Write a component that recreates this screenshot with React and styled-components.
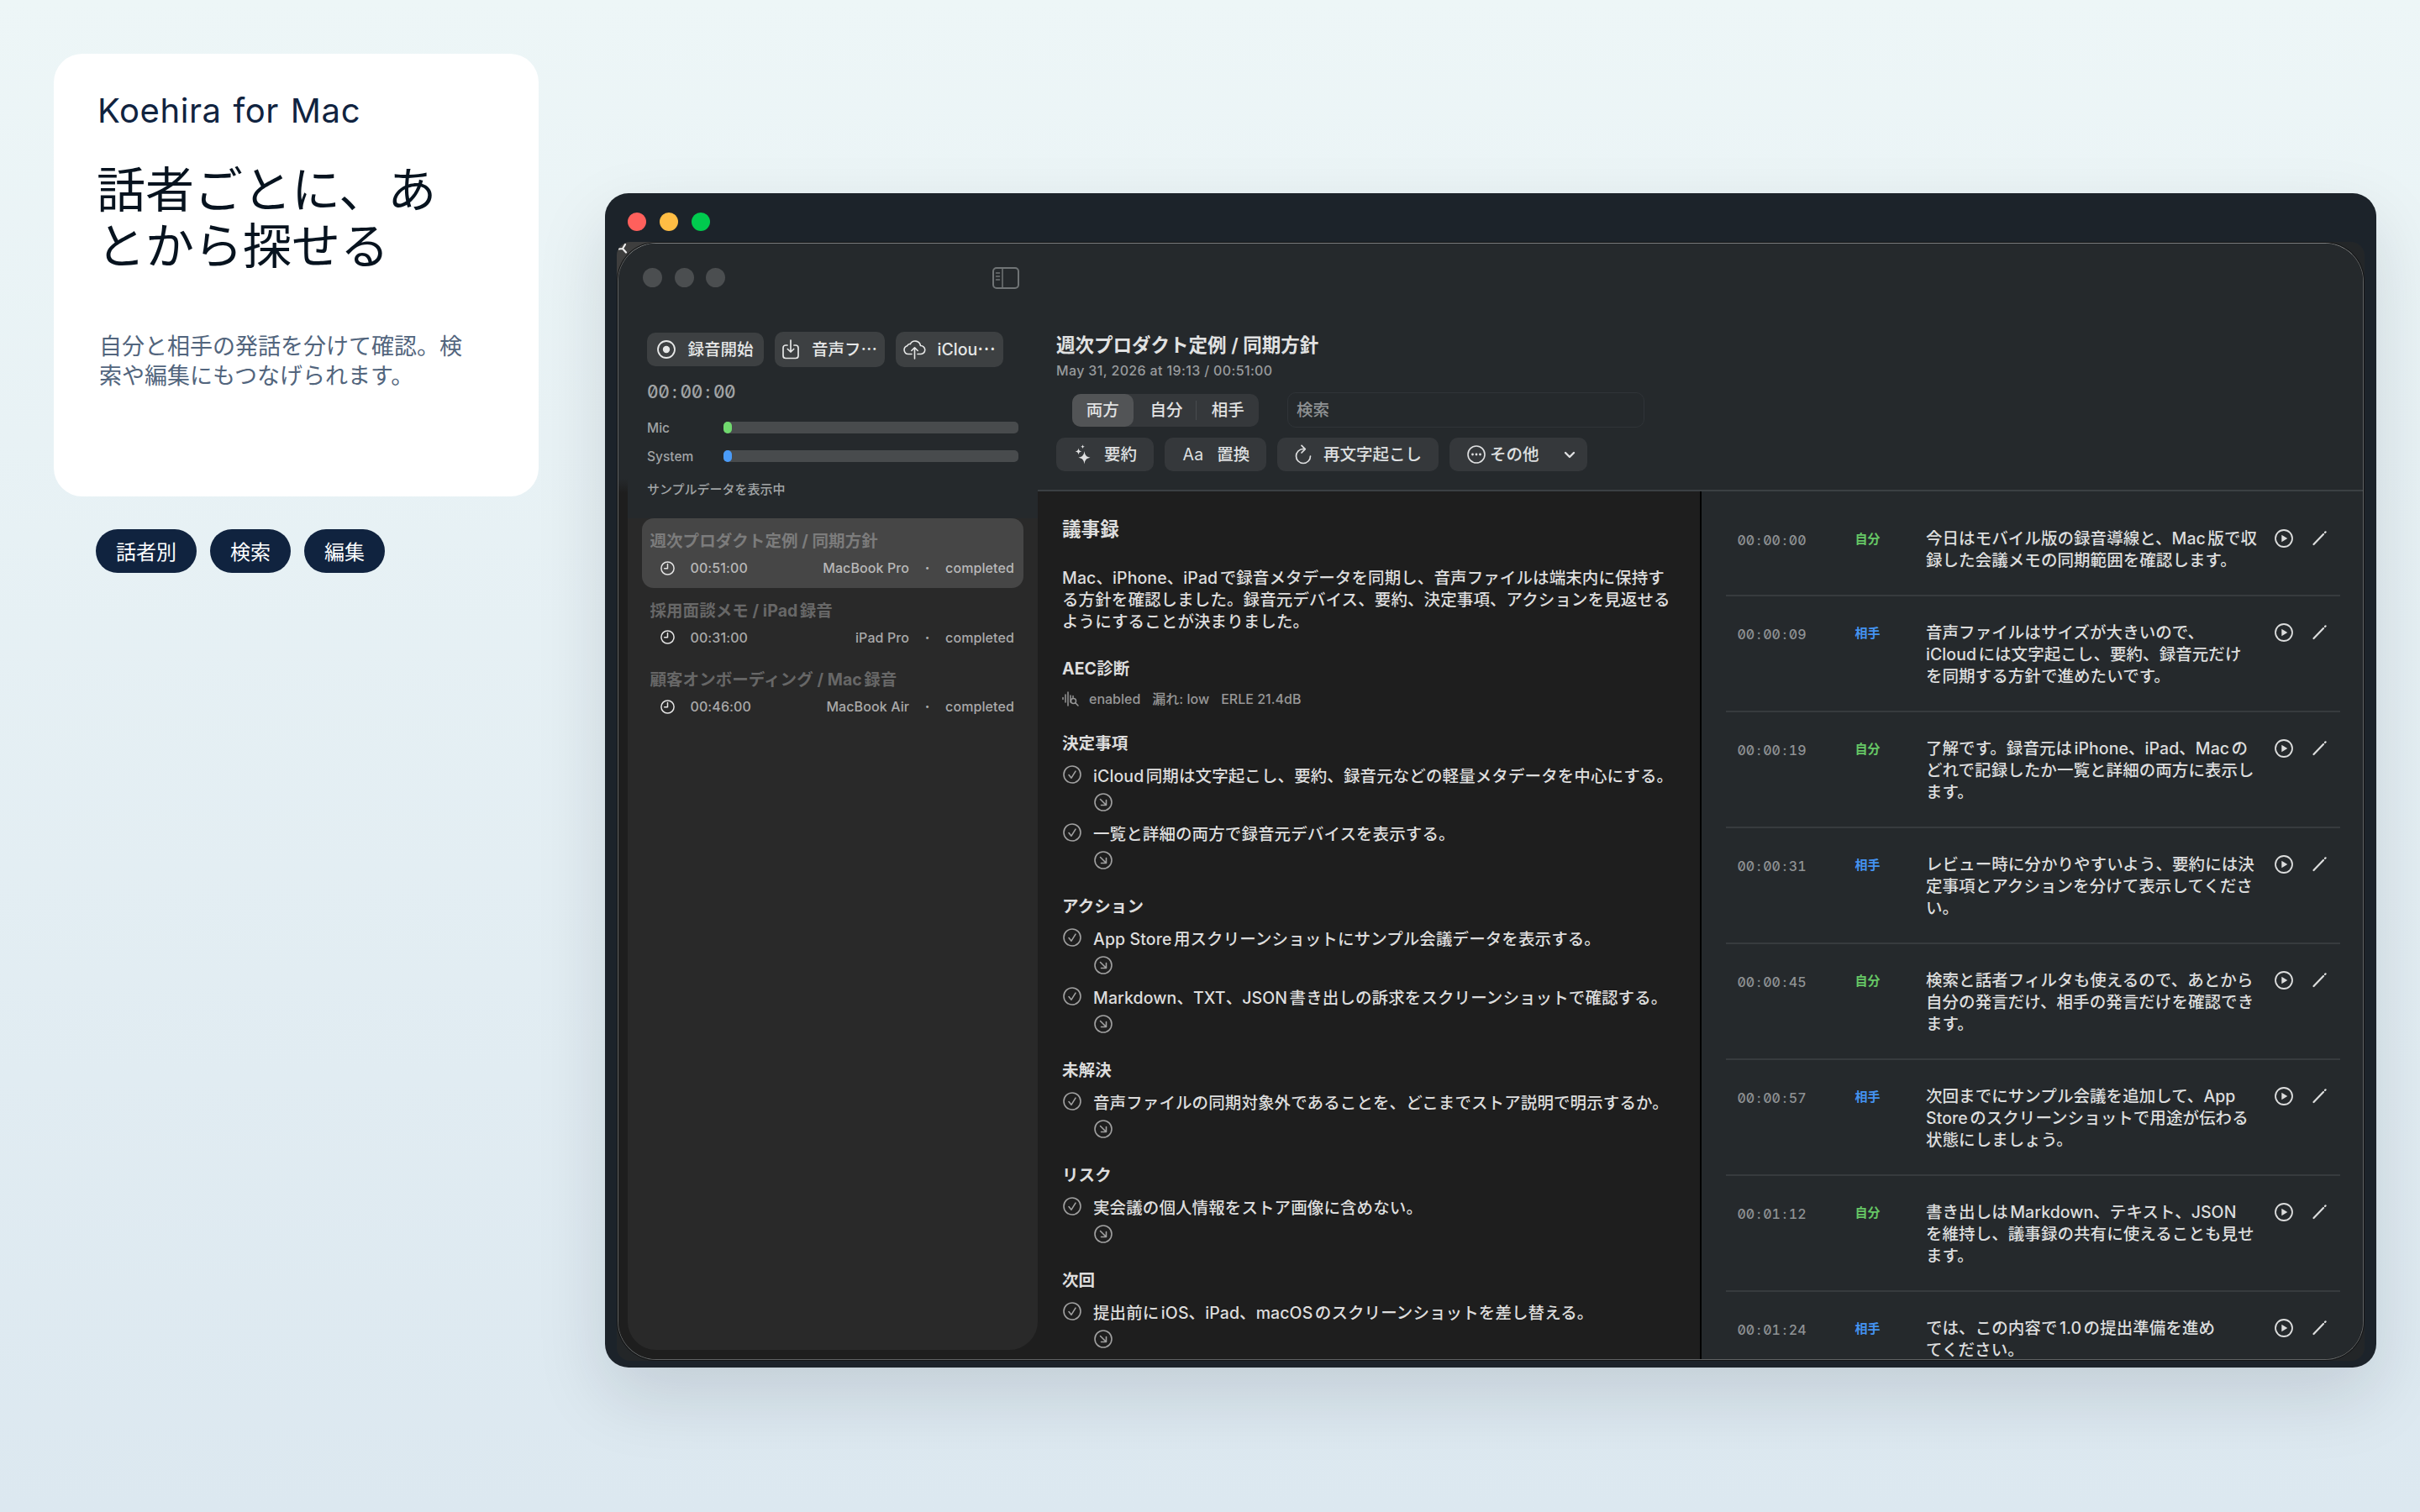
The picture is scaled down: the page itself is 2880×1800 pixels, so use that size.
import React from 'react'
import styled, { createGlobalStyle } from 'styled-components'

const Global = createGlobalStyle`
* { box-sizing: border-box; }
body {
margin: 0;
font-family: Inter, 'Noto Sans CJK JP', sans-serif;
text-autospace: normal;
white-space: nowrap;
}
svg { display: block; flex: none; fill: none; stroke: currentColor; stroke-linecap: round; stroke-linejoin: round; }
`

const Page = styled.main`
display: flex;
align-items: flex-start;
width: 2880px;
height: 1800px;
padding: 64px 52px 0 64px;
overflow: hidden;
background: linear-gradient(#edf6f7, #dce8f0);
`

/* ---------- intro ---------- */

const Intro = styled.section`
width: 577px;
font-family: 'Noto Sans CJK JP', sans-serif;
`

const IntroCard = styled.div`
height: 527px;
padding: 38px 50px 0 52px;
border-radius: 34px;
background: #fff;
`

const Product = styled.p`
margin: 0;
font-family: Inter, sans-serif;
font-size: 40px;
line-height: 60px;
letter-spacing: .6px;
word-spacing: 2px;
color: #10233f;
`

const Headline = styled.h1`
margin: 27px 0 0 -1px;
font-size: 58px;
font-weight: 400;
line-height: 67px;
color: #07131f;
`

const Lead = styled.p`
margin: 70px 0 0 2px;
font-size: 27px;
line-height: 35px;
color: #52657d;
`

const Tags = styled.div`
display: flex;
gap: 16px;
margin: 39px 0 0 50px;
`

const Tag = styled.span`
padding: 0 24px;
border-radius: 26px;
font-size: 24px;
line-height: 52px;
color: #fff;
background: #10233f;
`

/* ---------- window frame ---------- */

const Frame = styled.section`
width: 2108px;
height: 1398px;
margin: 166px 0 0 79px;
padding: 0 14px;
border-radius: 28px;
background: #1c232a;
box-shadow: 0 34px 84px rgba(12, 22, 42, .13);
`

const TrafficLights = styled.div`
display: flex;
align-items: center;
gap: 16px;
height: 58px;
padding: 10px 0 0 13px;
`

const Light = styled.i`
width: 22px;
height: 22px;
border-radius: 50%;
background: ${p => p.$color};
`

const Backdrop = styled.div`
position: relative;
height: 1332px;
padding: 1px;
border-radius: 16px;
overflow: hidden;
background: linear-gradient(135deg, #3e3e3e 3%, #232628 6%);
`

const CornerMark = styled.svg`
position: absolute;
left: 2px;
top: 1px;
color: #eee;
`

const AppWindow = styled.div`
position: relative;
display: flex;
height: 1330px;
border: 1.5px solid #606364;
border-top-color: #7b7e7f;
border-radius: 46px;
overflow: hidden;
background: #1e1e1e;
box-shadow: 0 0 0 1px #131415;
`

/* ---------- sidebar ---------- */

const SidebarArea = styled.aside`
width: 499px;
padding: 0 0 11px 11px;
background: linear-gradient(#25292c 280px, #1e1e1e 297px);
`

const Sidebar = styled.div`
height: 1317px;
border-radius: 0 0 34px 34px;
background: linear-gradient(#25292c 327px, #292929 327px);
`

const SidebarTop = styled.div`
display: flex;
align-items: center;
gap: 14.5px;
height: 81px;
padding: 0 22px 0 18px;
svg { margin-left: auto; color: #707476; }
`

const IdleDot = styled.i`
width: 23px;
height: 23px;
border-radius: 50%;
background: #4b4e50;
`

const Actions = styled.div`
display: flex;
align-items: center;
gap: 13px;
height: 42px;
margin: 24px 0 0 23px;
`

const ActionButton = styled.button`
display: flex;
align-items: center;
width: ${p => p.$w}px;
height: ${p => p.$h || 42}px;
padding: 0 0 0 ${p => p.$pad}px;
gap: ${p => p.$gap}px;
border: 0;
border-radius: 10px;
font: 500 19.5px/28px Inter, 'Noto Sans CJK JP', sans-serif;
color: #e6e7e7;
background: #3d4042;
`

const Ellipsis = styled.span`
font-family: 'Noto Sans CJK JP', sans-serif;
line-height: 0;
vertical-align: ${p => p.$lift || 0}px;
`

const Timer = styled.div`
height: 30px;
margin: 15px 0 10px 23px;
line-height: 30px;
color: #a1a4a6;
`

const Digits = styled.span`
font-size: ${p => p.$size}px;
font-weight: 500;
font-feature-settings: 'zero', 'tnum';
letter-spacing: ${p => p.$track || 0}px;
`

const Colon = styled.span`
display: inline-block;
width: .62em;
text-align: center;
letter-spacing: 0;
`

const Meter = styled.div`
display: flex;
align-items: center;
height: 34px;
padding: 0 23px;
font-size: 15.5px;
font-weight: 500;
color: #a1a4a6;
`

const MeterName = styled.span`
width: 90.5px;
`

const Track = styled.div`
width: 351px;
height: 14px;
border-radius: 5px;
background: #484b4d;
`

const Level = styled.div`
width: 10px;
height: 14px;
border-radius: 5px;
background: ${p => p.$color};
`

const Status = styled.div`
height: 46px;
margin-bottom: 11px;
padding-left: 23px;
font-size: 15px;
font-weight: 500;
line-height: 46px;
color: #a1a4a6;
`

const Recording = styled.div`
height: 82.7px;
margin: 0 17px 0 16.5px;
padding: 13px 11px 0 10px;
border-radius: 14px;
background: ${p => (p.$active ? '#464646' : 'transparent')};
`

const RecordingTitle = styled.div`
font-size: 19.5px;
font-weight: 700;
line-height: 28px;
letter-spacing: .06px;
color: ${p => (p.$active ? '#7c7c7c' : '#676767')};
`

const RecordingMeta = styled.div`
display: flex;
align-items: center;
height: 20px;
margin-top: 8px;
padding-left: 12px;
font-size: 16px;
font-weight: 500;
letter-spacing: .1px;
color: ${p => (p.$active ? '#b8b8b8' : '#a9a9a9')};
svg { margin-right: 19px; color: #e4e4e4; }
`

const Device = styled.span`
margin-left: auto;
`

const Bullet = styled.span`
width: 43px;
font-weight: 800;
text-align: center;
`

/* ---------- detail ---------- */

const Detail = styled.div`
flex: 1;
display: flex;
flex-direction: column;
`

const Header = styled.header`
height: 295px;
padding: 106px 0 0 22px;
border-bottom: 2px solid #3b4043;
background: #25292c;
`

const MeetingTitle = styled.h2`
margin: 0;
font-size: 22.5px;
font-weight: 600;
line-height: 30px;
color: #e1e2e2;
`

const MeetingDate = styled.div`
font-size: 16px;
font-weight: 500;
line-height: 30px;
letter-spacing: .36px;
color: #989b9d;
`

const FilterRow = styled.div`
display: flex;
align-items: center;
height: 42px;
margin: 11px 0 0 18.5px;
`

const Segments = styled.div`
display: flex;
align-items: center;
width: 222.5px;
height: 39px;
border-radius: 10px;
font-size: 19.5px;
font-weight: 500;
line-height: 39px;
color: #e1e2e2;
background: #35383b;
`

const Segment = styled.span`
width: 74px;
padding-left: ${p => p.$nudge || 0}px;
text-align: center;
border-radius: 10px;
background: ${p => (p.$active ? '#525456' : 'transparent')};
`

const SegmentDivider = styled.i`
width: 1.5px;
height: 23px;
background: #484c4f;
`

const Search = styled.div`
width: 425px;
height: 42px;
margin-left: 34px;
padding-left: 10px;
border: 1.5px solid #303438;
border-radius: 10px;
font-size: 19.5px;
font-weight: 500;
line-height: 40px;
color: #8f9294;
`

const Tools = styled.div`
display: flex;
gap: 13.5px;
margin-top: 12px;
`

const Tool = styled(ActionButton)`
height: 40px;
color: #dfe0e1;
background: #35383b;
`

const Aa = styled.span`
font-size: 19.5px;
font-weight: 400;
letter-spacing: .4px;
`

const ChevronSlot = styled.span`
margin-left: 24px;
`

const Panes = styled.div`
flex: 1;
display: flex;
min-height: 0;
`

const Minutes = styled.article`
width: 790px;
padding: 30px 0 0 29px;
border-right: 2px solid #000;
overflow: hidden;
font-size: 19.5px;
font-weight: 500;
line-height: 26px;
letter-spacing: .1px;
color: #dddddd;
background: #1e1e1e;
`

const MinutesTitle = styled.h3`
margin: 0 0 30px;
font-size: 22.5px;
font-weight: 600;
line-height: 30px;
`

const Section = styled.section`
margin-top: ${p => p.$top || 31}px;
`

const SectionTitle = styled.h4`
margin: 0 0 13px;
font-size: 19.5px;
font-weight: 700;
line-height: 26px;
text-autospace: no-autospace;
`

const Diagnostics = styled.div`
display: flex;
align-items: center;
gap: 14px;
height: 20px;
font-size: 16px;
letter-spacing: 0;
color: #979797;
svg { margin-right: -2px; }
`

const Item = styled.div`
display: grid;
grid-template-columns: 22px auto;
column-gap: 14px;
row-gap: 7px;
margin-bottom: 14.7px;
padding-left: 1px;
&:last-child { margin-bottom: 0; }
svg { color: #a0a0a0; }
`

const ItemLink = styled.div`
grid-column: 2;
padding-left: 1px;
height: 22px;
`

const Transcript = styled.div`
flex: 1;
padding: 13px 27px 0 29px;
overflow: hidden;
background: #25292c;
`

const Utterance = styled.div`
display: grid;
grid-template-columns: 140px 84.5px 415px 45px 16px;
padding: 30px 0 28px 13.5px;
border-bottom: 2px solid #373b3e;
font-size: 19.5px;
font-weight: 500;
line-height: 26px;
letter-spacing: .06px;
color: #dcdddd;
svg { margin-top: 2px; }
`

const Time = styled.div`
padding-top: 1px;
color: #8f9294;
`

const Speaker = styled.div`
padding-top: 1px;
font-size: 15px;
font-weight: 700;
letter-spacing: 0;
color: ${p => (p.$me ? '#65c765' : '#4493f0')};
`

/* ---------- icons ---------- */

const Svg = ({ w, h = w, sw = 1.6, children }) => (
    <svg width={w} height={h} viewBox={`0 0 ${w} ${h}`} strokeWidth={sw}>{children}</svg>
)

const SidebarIcon = () => (
    <Svg w={32} h={26} sw={2}>
        <rect x="1" y="1" width="30" height="24" rx="4" />
        <path d="M12 1v24M4.5 7h4M4.5 11h4M4.5 15h4" strokeWidth="1.5" />
    </Svg>
)

const RecordIcon = () => (
    <Svg w={22} sw={1.8}>
        <circle cx="11" cy="11" r="10" />
        <circle cx="11" cy="11" r="4.2" fill="currentColor" stroke="none" />
    </Svg>
)

const ImportIcon = () => (
    <Svg w={20} h={24} sw={1.7}>
        <path d="M6 7H4a3 3 0 0 0-3 3v9.500a3 3 0 0 0 3 3h12a3 3 0 0 0 3-3V10a3 3 0 0 0-3-3h-2M10 1v14M6.300 11.500 10 15l3.700-3.500" />
    </Svg>
)

const CloudIcon = () => (
    <Svg w={27} h={24} sw={1.6}>
        <path d="M10 17.500H6a5 5 0 0 1-1.300-9.800C5.500 6 7 5.300 8.300 5.600A6.500 6.500 0 0 1 20.500 7.500 5 5 0 0 1 21 17.500h-4M13.500 23V10M9.800 13.500l3.700-3.700 3.700 3.700" />
    </Svg>
)

const ClockIcon = () => (
    <Svg w={17} sw={1.5}>
        <circle cx="8.5" cy="8.500" r="7.600" />
        <path d="M8.500 3.500v5.200H4.700" />
    </Svg>
)

const SparklesIcon = () => (
    <Svg w={20} h={24}>
        <g fill="currentColor" stroke="none">
            <path d="M11.500 8c.8 5 2 6.700 7 7.700-5 1-6.200 2.800-7 7.800-.8-5-2-6.800-7-7.800 5-1 6.200-2.700 7-7.700z" />
            <path d="M4.500 4.500c.5 2.700 1.100 3.400 3.800 3.900-2.700.5-3.300 1.200-3.800 3.900C4 9.600 3.400 8.900.7 8.400 3.400 7.900 4 7.200 4.500 4.500z" />
            <path d="M9.500.300c.3 1.700.7 2.200 2.500 2.500-1.800.3-2.200.8-2.500 2.500C9.200 3.600 8.800 3.100 7 2.800 8.800 2.500 9.200 2 9.500.300z" />
        </g>
    </Svg>
)

const RedoIcon = () => (
    <Svg w={20} h={24} sw={1.7}>
        <path d="M10 5.500a8.500 8.500 0 1 0 8.500 8.500M8 1.300l4.300 4.300L8 10" />
    </Svg>
)

const MoreIcon = () => (
    <Svg w={22} sw={1.6}>
        <circle cx="11" cy="11" r="10" />
        <g fill="currentColor" stroke="none">
            <circle cx="6.500" cy="11" r="1.400" />
            <circle cx="11" cy="11" r="1.400" />
            <circle cx="15.500" cy="11" r="1.400" />
        </g>
    </Svg>
)

const ChevronIcon = () => (
    <Svg w={14} h={9} sw={2.4}>
        <path d="M2 2l5 5 5-5" />
    </Svg>
)

const WaveIcon = () => (
    <Svg w={20} h={18} sw={1.5}>
        <path d="M1 7.500v2M4 4v9M7 1v16M10 5v8M13 5.500v2" />
        <circle cx="13.500" cy="11.500" r="3" />
        <path d="M15.800 13.800 19 17" />
    </Svg>
)

const CheckIcon = () => (
    <Svg w={22}>
        <circle cx="11" cy="11" r="10" />
        <path d="M7 11.600l3 3.600 5-8" />
    </Svg>
)

const JumpIcon = () => (
    <Svg w={22}>
        <circle cx="11" cy="11" r="10" />
        <path d="M7.500 7.500l7 7M14.500 8.500v6h-6" />
    </Svg>
)

const PlayIcon = () => (
    <Svg w={22} sw={1.8}>
        <circle cx="11" cy="11" r="10" />
        <path d="M8.300 6.800v8.400l7-4.200z" fill="currentColor" stroke="none" />
    </Svg>
)

const PencilIcon = () => (
    <Svg w={18} h={22} sw={2.2}>
        <path d="M1.500 18 13 6M15 3.900l.6-.6" />
    </Svg>
)

/* ---------- data ---------- */

const recordings = [
    { title: '週次プロダクト定例 / 同期方針', time: '00:51:00', device: 'MacBook Pro' },
    { title: '採用面談メモ / iPad録音', time: '00:31:00', device: 'iPad Pro' },
    { title: '顧客オンボーディング / Mac録音', time: '00:46:00', device: 'MacBook Air' },
]

const sections = [
    { title: '決定事項', top: 30, items: ['iCloud同期は文字起こし、要約、録音元などの軽量メタデータを中心にする。', '一覧と詳細の両方で録音元デバイスを表示する。'] },
    { title: 'アクション', items: ['App Store用スクリーンショットにサンプル会議データを表示する。', 'Markdown、TXT、JSON書き出しの訴求をスクリーンショットで確認する。'] },
    { title: '未解決', items: ['音声ファイルの同期対象外であることを、どこまでストア説明で明示するか。'] },
    { title: 'リスク', items: ['実会議の個人情報をストア画像に含めない。'] },
    { title: '次回', items: ['提出前にiOS、iPad、macOSのスクリーンショットを差し替える。'] },
]

const utterances = [
    { time: '00:00:00', me: true, lines: ['今日はモバイル版の録音導線と、Mac版で収', '録した会議メモの同期範囲を確認します。'] },
    { time: '00:00:09', me: false, lines: ['音声ファイルはサイズが大きいので、', 'iCloudには文字起こし、要約、録音元だけ', 'を同期する方針で進めたいです。'] },
    { time: '00:00:19', me: true, lines: ['了解です。録音元はiPhone、iPad、Macの', 'どれで記録したか一覧と詳細の両方に表示し', 'ます。'] },
    { time: '00:00:31', me: false, lines: ['レビュー時に分かりやすいよう、要約には決', '定事項とアクションを分けて表示してくださ', 'い。'] },
    { time: '00:00:45', me: true, lines: ['検索と話者フィルタも使えるので、あとから', '自分の発言だけ、相手の発言だけを確認でき', 'ます。'] },
    { time: '00:00:57', me: false, lines: ['次回までにサンプル会議を追加して、App', 'Storeのスクリーンショットで用途が伝わる', '状態にしましょう。'] },
    { time: '00:01:12', me: true, lines: ['書き出しはMarkdown、テキスト、JSON', 'を維持し、議事録の共有に使えることも見せ', 'ます。'] },
    { time: '00:01:24', me: false, lines: ['では、この内容で1.0の提出準備を進め', 'てください。'] },
]

const MonoTime = ({ value, size, track }) => {
    const [h, m, s] = value.split(':')
    return <Digits $size={size} $track={track}>{h}<Colon>:</Colon>{m}<Colon>:</Colon>{s}</Digits>
}

const Lines = ({ lines }) => <div>{lines.map(line => <div key={line}>{line}</div>)}</div>

export default function App() {
    return (
        <Page>
            <Global />
            <Intro>
                <IntroCard>
                    <Product>Koehira for Mac</Product>
                    <Headline>話者ごとに、あ<br />とから探せる</Headline>
                    <Lead>自分と相手の発話を分けて確認。検<br />索や編集にもつなげられます。</Lead>
                </IntroCard>
                <Tags>
                    {['話者別', '検索', '編集'].map(tag => <Tag key={tag}>{tag}</Tag>)}
                </Tags>
            </Intro>

            <Frame>
                <TrafficLights>
                    {['#ff605c', '#ffbd44', '#00ca4e'].map(c => <Light key={c} $color={c} />)}
                </TrafficLights>
                <Backdrop>
                    <CornerMark width="12" height="14" strokeWidth="2.2">
                        <path d="M0 7.500l5-.5M5 7l3-5M5 7l4 4.500" />
                    </CornerMark>
                    <AppWindow>
                        <SidebarArea>
                            <Sidebar>
                                <SidebarTop>
                                    <IdleDot /><IdleDot /><IdleDot />
                                    <SidebarIcon />
                                </SidebarTop>
                                <Actions>
                                    <ActionButton $w={139} $h={40} $pad={12} $gap={14.5}><RecordIcon />録音開始</ActionButton>
                                    <ActionButton $w={131} $pad={9} $gap={15}><ImportIcon /><span>音声フ<Ellipsis>⋯</Ellipsis></span></ActionButton>
                                    <ActionButton $w={128} $pad={8.5} $gap={14}><CloudIcon /><span>iClou<Ellipsis $lift={6}>⋯</Ellipsis></span></ActionButton>
                                </Actions>
                                <Timer><MonoTime value="00:00:00" size={21} track={-.4} /></Timer>
                                <Meter><MeterName>Mic</MeterName><Track><Level $color="#70d96e" /></Track></Meter>
                                <Meter><MeterName>System</MeterName><Track><Level $color="#4a9bf8" /></Track></Meter>
                                <Status>サンプルデータを表示中</Status>
                                {recordings.map((r, i) => (
                                    <Recording key={r.time} $active={i === 0}>
                                        <RecordingTitle $active={i === 0}>{r.title}</RecordingTitle>
                                        <RecordingMeta $active={i === 0}>
                                            <ClockIcon />
                                            {r.time}
                                            <Device>{r.device}</Device>
                                            <Bullet>·</Bullet>
                                            completed
                                        </RecordingMeta>
                                    </Recording>
                                ))}
                            </Sidebar>
                        </SidebarArea>

                        <Detail>
                            <Header>
                                <MeetingTitle>週次プロダクト定例 / 同期方針</MeetingTitle>
                                <MeetingDate>May 31, 2026 at 19:13 / 00:51:00</MeetingDate>
                                <FilterRow>
                                    <Segments>
                                        <Segment $active>両方</Segment>
                                        <Segment $nudge={4}>自分</Segment>
                                        <SegmentDivider />
                                        <Segment>相手</Segment>
                                    </Segments>
                                    <Search>検索</Search>
                                </FilterRow>
                                <Tools>
                                    <Tool $w={115.5} $pad={22} $gap={15}><SparklesIcon />要約</Tool>
                                    <Tool $w={120.5} $pad={21.5} $gap={15.5}><Aa>Aa</Aa>置換</Tool>
                                    <Tool $w={191.5} $pad={21} $gap={14}><RedoIcon />再文字起こし</Tool>
                                    <Tool $w={164} $pad={21} $gap={5}>
                                        <MoreIcon />その他<ChevronSlot><ChevronIcon /></ChevronSlot>
                                    </Tool>
                                </Tools>
                            </Header>
                            <Panes>
                                <Minutes>
                                    <MinutesTitle>議事録</MinutesTitle>
                                    <Lines
                                        lines={[
                                            'Mac、iPhone、iPadで録音メタデータを同期し、音声ファイルは端末内に保持す',
                                            'る方針を確認しました。録音元デバイス、要約、決定事項、アクションを見返せる',
                                            'ようにすることが決まりました。',
                                        ]}
                                    />
                                    <Section $top={29.5}>
                                        <SectionTitle>AEC診断</SectionTitle>
                                        <Diagnostics>
                                            <WaveIcon />
                                            <span>enabled</span>
                                            <span>漏れ: low</span>
                                            <span>ERLE 21.4dB</span>
                                        </Diagnostics>
                                    </Section>
                                    {sections.map(s => (
                                        <Section key={s.title} $top={s.top}>
                                            <SectionTitle>{s.title}</SectionTitle>
                                            {s.items.map(item => (
                                                <Item key={item}>
                                                    <CheckIcon />
                                                    <div>{item}</div>
                                                    <ItemLink><JumpIcon /></ItemLink>
                                                </Item>
                                            ))}
                                        </Section>
                                    ))}
                                </Minutes>
                                <Transcript>
                                    {utterances.map(u => (
                                        <Utterance key={u.time}>
                                            <Time><MonoTime value={u.time} size={16} /></Time>
                                            <Speaker $me={u.me}>{u.me ? '自分' : '相手'}</Speaker>
                                            <Lines lines={u.lines} />
                                            <PlayIcon />
                                            <PencilIcon />
                                        </Utterance>
                                    ))}
                                </Transcript>
                            </Panes>
                        </Detail>
                    </AppWindow>
                </Backdrop>
            </Frame>
        </Page>
    )
}
